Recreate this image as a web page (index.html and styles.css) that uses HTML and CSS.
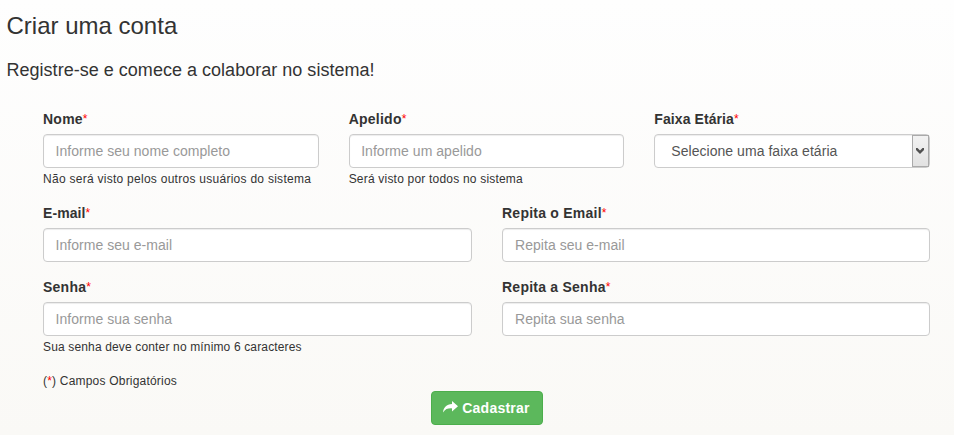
FILE: index.html
```html
<!DOCTYPE html>
<html lang="pt-BR">
<head>
<meta charset="utf-8">
<title>Criar uma conta</title>
<link rel="stylesheet" href="styles.css">
</head>
<body>
<main>
  <h1>Criar uma conta</h1>
  <h2>Registre-se e comece a colaborar no sistema!</h2>
  <form>
    <div class="row three">
      <div class="field">
        <label class="spaced" for="nome">Nome<span class="req">*</span></label>
        <input id="nome" type="text" placeholder="Informe seu nome completo">
        <p class="help wide">Não será visto pelos outros usuários do sistema</p>
      </div>
      <div class="field">
        <label class="spaced" for="apelido">Apelido<span class="req">*</span></label>
        <input id="apelido" type="text" placeholder="Informe um apelido">
        <p class="help medium">Será visto por todos no sistema</p>
      </div>
      <div class="field">
        <label for="faixa">Faixa Etária<span class="req">*</span></label>
        <div class="select" id="faixa" role="combobox" tabindex="0">
          <span class="value">Selecione uma faixa etária</span>
          <span class="arrow"><svg width="8" height="6" viewBox="0 0 8 6"><path d="M0 0h1.500L4 2.500 6.500 0H8v2L4 6 0 2Z" fill="#505050"/></svg></span>
        </div>
      </div>
    </div>
    <div class="row two">
      <div class="field">
        <label for="email">E-mail<span class="req">*</span></label>
        <input id="email" type="text" placeholder="Informe seu e-mail">
      </div>
      <div class="field">
        <label class="spaced" for="email2">Repita o Email<span class="req">*</span></label>
        <input id="email2" type="text" placeholder="Repita seu e-mail">
      </div>
    </div>
    <div class="row two last">
      <div class="field">
        <label class="spaced" for="senha">Senha<span class="req">*</span></label>
        <input id="senha" type="password" placeholder="Informe sua senha">
        <p class="help">Sua senha deve conter no mínimo 6 caracteres</p>
      </div>
      <div class="field">
        <label class="spaced" for="senha2">Repita a Senha<span class="req">*</span></label>
        <input id="senha2" type="password" placeholder="Repita sua senha">
      </div>
    </div>
    <p class="note">(<span class="star">*</span>) Campos Obrigatórios</p>
    <button type="button"><svg width="15" height="12" viewBox="0 0 15 12"><path d="M9 0 15 5.200 9 10.400V7.400C5 7.200 2.300 8 0 11.500 .500 6.300 3.500 3.100 9 2.900Z" fill="#fff"/></svg><span>Cadastrar</span></button>
  </form>
</main>
</body>
</html>
```
FILE: styles.css
```css
* { box-sizing: border-box; }
body {
  margin: 0;
  height: 435px;
  overflow: hidden;
  background: linear-gradient(#fefefe, #faf9f6);
  color: #333;
  font: 14px/20px "Liberation Sans", Arial, sans-serif;
}
main { padding: 13px 24px 0 6.5px; }
h1, h2 { margin: 0; font-weight: 400; }
h1 { font-size: 24px; line-height: 26px; }
h2 { margin-top: 21px; font-size: 18px; line-height: 20px; letter-spacing: .02px; }
form { padding: 29px 0 0 36.5px; }
.row { display: grid; column-gap: 30px; }
.three { grid-template-columns: repeat(3, 1fr); height: 94px; }
.two { grid-template-columns: repeat(2, 1fr); height: 74px; }
.two .field + .field label { padding-left: .5px; }
.two .field + .field input { padding-left: 12.5px; }
.last { height: 96px; }
label { display: block; height: 25px; font-weight: 700; letter-spacing: .08px; }
.spaced { letter-spacing: .24px; }
.req { color: #f00; font-size: 12px; font-weight: 400; line-height: 1; vertical-align: 1px; }
.star { color: #f00; }
input, .select {
  display: block;
  width: 100%;
  height: 34px;
  padding: 6px 11.5px;
  border: 1px solid #ccc;
  border-radius: 4px;
  background: #fff;
  box-shadow: inset 0 1px 1px rgba(0, 0, 0, .075);
  color: #555;
  font: inherit;
  letter-spacing: .04px;
}
input::placeholder { color: #999; opacity: 1; }
.select { display: flex; padding: 0; }
.value { flex: 1; padding: 6px 16px; }
.arrow {
  display: flex;
  align-items: center;
  justify-content: center;
  width: 17px;
  border: 1px solid #aaa;
  background: linear-gradient(#f2f2f2, #e2e2e2);
}
.help, .note { margin: 0; font-size: 12px; line-height: 17px; }
.help { padding-top: 3px; letter-spacing: .15px; }
.wide { letter-spacing: .27px; }
.medium { letter-spacing: .2px; }
.note { height: 18px; letter-spacing: .2px; }
button {
  display: flex;
  align-items: center;
  justify-content: center;
  gap: 4px;
  width: 112px;
  height: 34px;
  margin: 0 auto;
  padding: 0;
  border: 1px solid #4cae4c;
  border-radius: 4px;
  background: #5cb85c;
  color: #fff;
  font: bold 14px/20px "Liberation Sans", Arial, sans-serif;
  letter-spacing: .25px;
}
button svg { position: relative; top: -1px; }
```
